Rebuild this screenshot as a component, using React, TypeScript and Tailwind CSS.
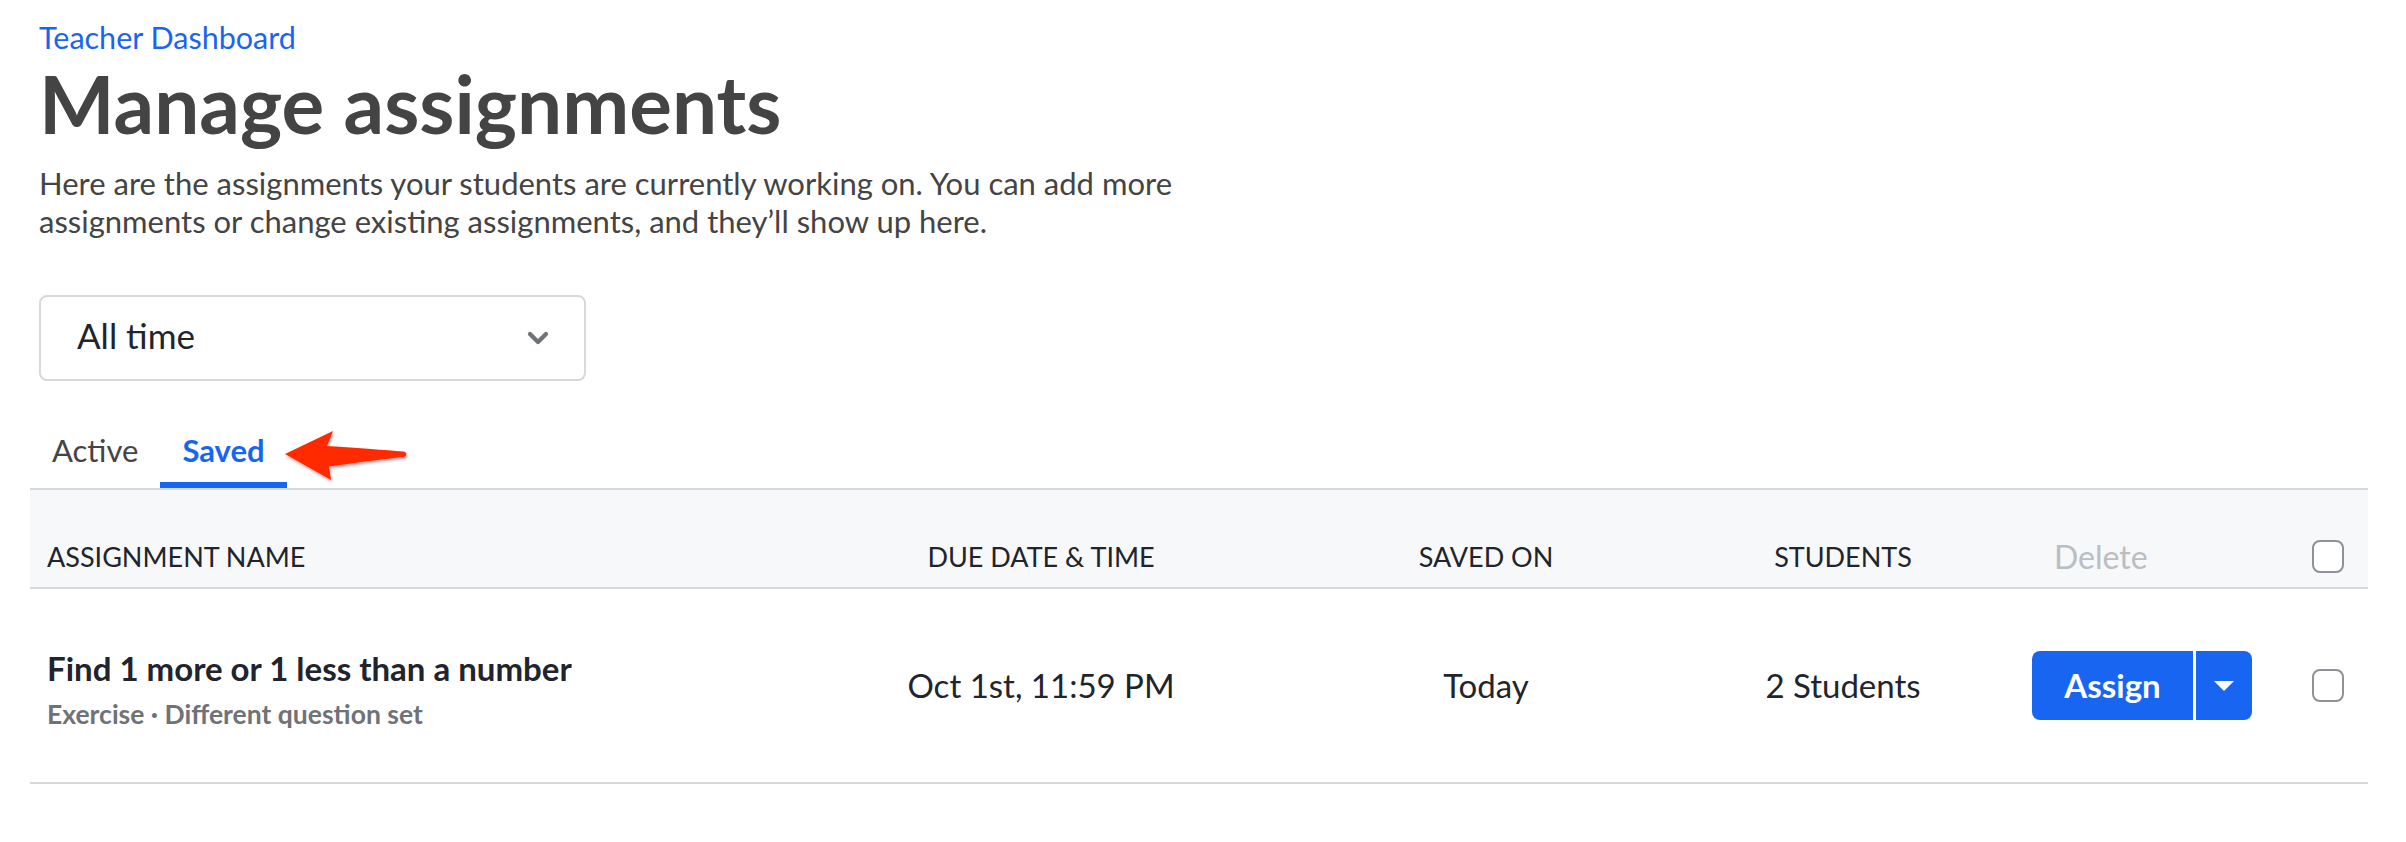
import { ChevronDown } from "lucide-react";

export default function App() {
  return (
    <div className="min-h-screen bg-white font-['Lato',sans-serif] text-[#21242c]">
      <div className="pl-[30px] pr-[38px]">
        {/* Intro */}
        <div className="pl-[9px]">
          <a href="#" className="block pt-[19px] text-[30.5px] leading-[36px] text-[#1865f2]">
            Teacher Dashboard
          </a>
          <h1 className="text-[80px] font-bold leading-[96px] text-[#444444]">Manage assignments</h1>
          <p className="mt-[13px] max-w-[1190px] text-[31px] leading-[38px] text-[#444444]">
            Here are the assignments your students are currently working on. You can add more assignments or change
            existing assignments, and they’ll show up here.
          </p>
          <button className="mt-[55px] flex h-[86px] w-[547px] items-center justify-between rounded-[8px] border-2 border-[#d6d8da] pl-[36px] pr-[30px] pb-[6px] text-[35px] text-[#21242c]">
            <span>All time</span>
            <ChevronDown className="mt-[6px] h-[32px] w-[32px] text-[#6f7277]" strokeWidth={3.2} />
          </button>
        </div>

        {/* Tabs */}
        <div className="relative mt-[51px] flex text-[31px] leading-[36px]">
          <button className="border-b-[6px] border-transparent px-[22px] pb-[14px] text-[#444444]">Active</button>
          <button className="border-b-[6px] border-[#1865f2] px-[22px] pb-[14px] font-bold text-[#1865f2]">Saved</button>
          <svg
            className="absolute left-[253px] top-[-4px] h-[60px] w-[130px]"
            viewBox="283 428 130 60"
          >
            <defs>
              <filter id="arrowShadow" x="-20%" y="-30%" width="140%" height="160%">
                <feDropShadow dx="1" dy="2" stdDeviation="1.5" floodColor="#000" floodOpacity="0.35" />
              </filter>
            </defs>
            <path
              d="M285 454 L333 431 L327 446 C360 448 385 450 403 451.5 C407.5 452 407.5 456.5 403 457 C385 459 360 462 329 466.5 L331 480 Z"
              fill="#ff2a00"
              filter="url(#arrowShadow)"
            />
          </svg>
        </div>

        {/* Table */}
        <div className="border-t-2 border-[#d6d8da]">
          <div className="flex items-center border-b-2 border-[#d6d8da] bg-[#f7f8fa] pt-[50px] pb-[14px] text-[27px] leading-[32px]">
            <div className="w-[800px] pl-[17px]">ASSIGNMENT NAME</div>
            <div className="w-[422px] text-center">DUE DATE &amp; TIME</div>
            <div className="w-[468px] text-center">SAVED ON</div>
            <div className="w-[246px] text-center">STUDENTS</div>
            <div className="w-[310px] pl-[88px] text-[32px] text-[#babec2]">Delete</div>
            <div className="w-[92px] pl-[36px]">
              <div className="h-[33px] w-[32px] rounded-[8px] border-2 border-[#8e9196] bg-white" />
            </div>
          </div>

          <div className="flex h-[195px] items-center border-b-2 border-[#d6d8da] text-[33px]">
            <div className="w-[800px] pl-[17px] pt-[6px]">
              <div className="text-[33px] font-bold leading-[40px]">Find 1 more or 1 less than a number</div>
              <div className="mt-[10px] text-[26.5px] font-bold leading-[32px] text-[#6f7277]">
                Exercise · Different question set
              </div>
            </div>
            <div className="w-[422px] text-center">Oct 1st, 11:59 PM</div>
            <div className="w-[468px] text-center">Today</div>
            <div className="w-[246px] text-center">2 Students</div>
            <div className="w-[310px] pl-[66px]">
              <div className="flex h-[69px] w-[220px] overflow-hidden rounded-[8px] text-white">
                <button className="w-[161px] bg-[#1865f2] text-[33px] font-bold">Assign</button>
                <div className="w-[3px] bg-white" />
                <button className="flex w-[56px] items-center justify-center bg-[#1865f2]">
                  <svg width="20" height="10" viewBox="0 0 20 10">
                    <path d="M0 0 L20 0 L10 10 Z" fill="white" />
                  </svg>
                </button>
              </div>
            </div>
            <div className="w-[92px] pl-[36px]">
              <div className="h-[33px] w-[32px] rounded-[8px] border-2 border-[#8e9196]" />
            </div>
          </div>
        </div>
      </div>
    </div>
  );
}
